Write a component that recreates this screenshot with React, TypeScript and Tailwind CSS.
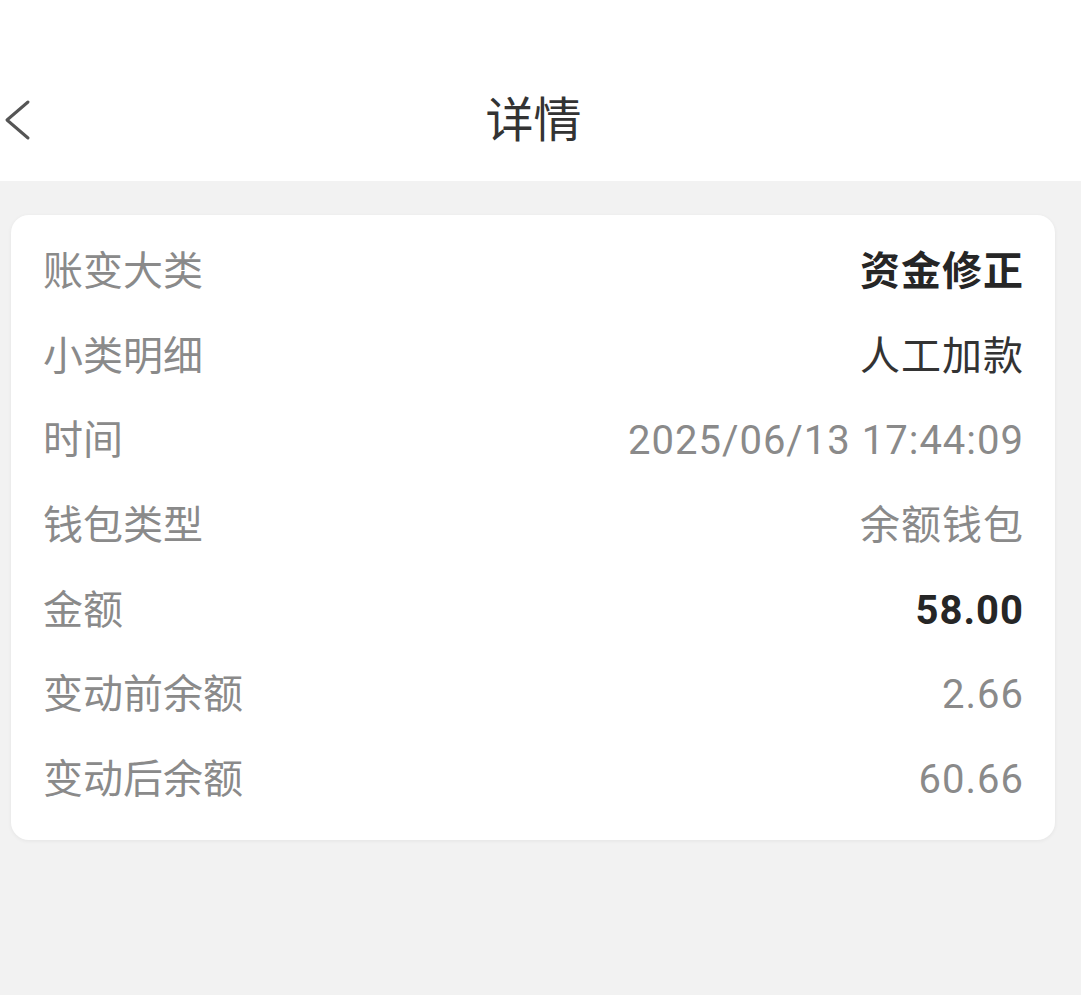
type Row = {
	label: string;
	value: string;
	strong?: boolean;
};

const rows: Row[] = [
	{ label: "账变大类", value: "资金修正", strong: true },
	{ label: "小类明细", value: "人工加款" },
	{ label: "时间", value: "2025/06/13 17:44:09" },
	{ label: "钱包类型", value: "余额钱包" },
	{ label: "金额", value: "58.00", strong: true },
	{ label: "变动前余额", value: "2.66" },
	{ label: "变动后余额", value: "60.66" }
];

export default function App() {
	return (
		<div
			className="min-h-[995px] w-full bg-[#f2f2f2]"
			style={{ fontFamily: '"Roboto", "Noto Sans CJK SC", sans-serif' }}
		>
			<div className="bg-white pt-[60px]">
				<div className="relative flex h-[121px] items-center justify-center pr-[14px]">
					<button className="absolute left-0 top-[38px] text-[#555]">
						<svg width="36" height="44" viewBox="0 0 36 44" fill="none">
							<polyline
								points="28,4 7,22 28,40"
								stroke="currentColor"
								strokeWidth="3"
								strokeLinecap="round"
								strokeLinejoin="round"
							/>
						</svg>
					</button>
					<h1 className="text-[48px] text-[#333]">详情</h1>
				</div>
			</div>

			<div className="ml-[11px] mr-[26px] mt-[34px] rounded-[18px] bg-white pb-[18px] pl-[32px] pr-[31px] pt-[15px] shadow-[0_1px_4px_rgba(0,0,0,0.06)]">
				{rows.map(row => (
					<div key={row.label} className="flex h-[84.6px] items-center justify-between text-[40px]">
						<span className="text-[#8a8a8a]">{row.label}</span>
						<span
							className={
								"tracking-[1px] " +
								(row.strong
									? "font-bold text-[#262626]"
									: row.label === "小类明细"
										? "text-[#333]"
										: "text-[#8a8a8a]")
							}
						>
							{row.value}
						</span>
					</div>
				))}
			</div>
		</div>
	);
}
